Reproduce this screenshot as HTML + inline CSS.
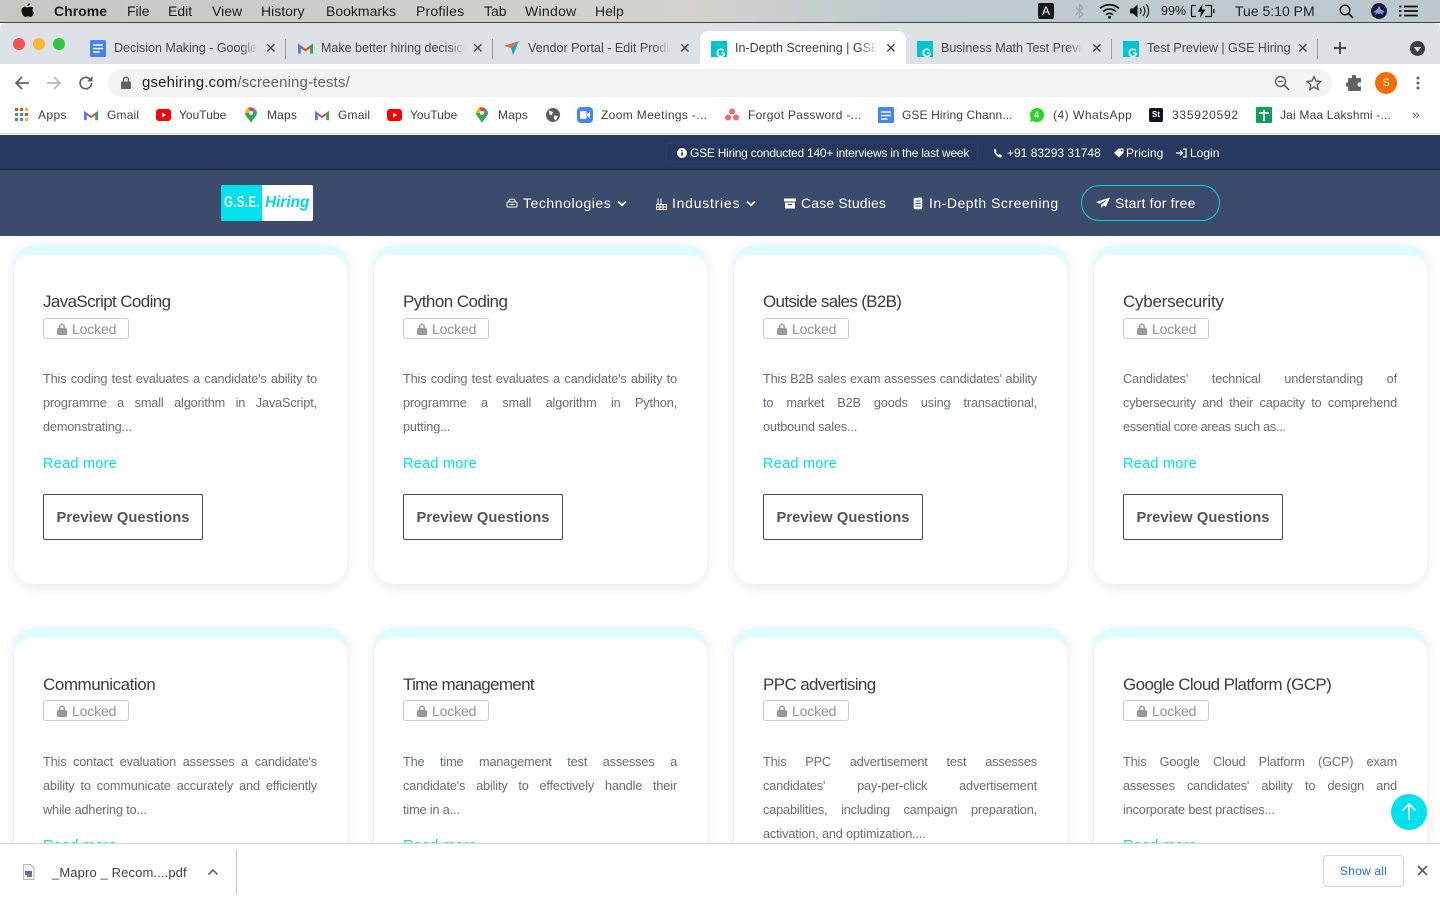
<!DOCTYPE html>
<html><head><meta charset="utf-8"><title>In-Depth Screening | GSE Hiring</title>
<style>
*{box-sizing:border-box}
html,body{margin:0;padding:0;width:1440px;height:900px;overflow:hidden;background:#fff;font-family:"Liberation Sans",sans-serif}
#root{position:relative;width:1440px;height:900px;overflow:hidden;background:#fff}
.a{position:absolute}
.t{position:absolute;white-space:nowrap;line-height:20px;height:20px}
svg{position:absolute;display:block}
#menu{left:0;top:0;width:1440px;height:23px;background:linear-gradient(90deg,#c6c7c3 0%,#cfcfca 30%,#d3d2cc 48%,#bfcbcf 62%,#bcc8cd 100%);border-bottom:1px solid #3a3f42}
#menu .t{top:1px;font-size:14px;color:#1c1c1c}
#strip{left:0;top:23px;width:1440px;height:41px;background:#dee1e6;border-radius:6px 6px 0 0}
.tab{font-size:12.5px;color:#45474a;top:38px;overflow:hidden;-webkit-mask-image:linear-gradient(90deg,#000 88%,transparent)}
.x{font-size:14px;color:#45474a;top:38px}
.sep{width:1px;height:20px;top:39px;background:#9a9da2}
#active{left:700px;top:31px;width:206px;height:33px;background:#fff;border-radius:8px 8px 0 0}
.g{width:16px;height:16px;background:#00c4d4;top:41px;overflow:hidden}
.g:after{content:"G";position:absolute;left:5px;top:5px;color:#fff;font:bold 12px/14px "Liberation Sans",sans-serif}
#tool{left:0;top:64px;width:1440px;height:33px;background:#fff}
#addr{left:108px;top:69px;width:1224px;height:28px;background:#f1f3f4;border-radius:14px}
#bm{left:0;top:97px;width:1440px;height:37px;background:#fff;border-bottom:1px solid #d0d2d6}
.b{font-size:12px;color:#3d4043;top:105px;letter-spacing:.18px}
#top{left:0;top:135px;width:1440px;height:35px;background:#27395f;border-bottom:1px solid #1c2d50}
#nav{left:0;top:170px;width:1440px;height:66px;background:#3c4b6b}
.n{font-size:14px;color:#fff;letter-spacing:.38px;top:193px}
.s{font-size:12px;color:#fff;letter-spacing:-.1px;top:143px}
.card{position:absolute;width:333px;background:#dffcfe;border-radius:20px;box-shadow:0 3px 14px rgba(0,0,0,.09);overflow:hidden}
.card i{position:absolute;left:0;top:10px;right:0;bottom:0;background:#fff;border-radius:16px 16px 20px 20px}
.ti{font-size:17px;color:#3c3c3c;letter-spacing:-.62px}
.lk{position:absolute;width:86px;height:21px;border:1px solid #ccc;border-radius:3px;color:#8f9296;font-size:14px;line-height:21px;padding-left:28px;letter-spacing:-.15px}
.lk svg{left:13px;top:4px}
.p{position:absolute;width:274px;font-size:12.7px;line-height:24px;height:24px;color:#666d75;letter-spacing:-.14px;white-space:nowrap}
.j{white-space:normal;text-align:justify;text-align-last:justify}
.r{font-size:14.5px;color:#00e1ee;letter-spacing:.25px}
.btn{position:absolute;width:160px;height:46px;border:1px solid #4b4b4b;border-radius:2px;font-weight:bold;font-size:14.7px;line-height:46px;color:#555;text-align:center;letter-spacing:.1px;background:#fff}
#dl{left:0;top:843px;width:1440px;height:57px;background:#fff;border-top:1px solid #d5d7da;z-index:5}
#up{left:1391px;top:794px;width:36px;height:36px;border-radius:50%;background:#00e1ee;z-index:4}
</style></head><body><div id="root">

<!-- page content -->
<div class="card" style="left:14px;top:245px;height:339px"><i></i></div>
<div class="card" style="left:374px;top:245px;height:339px"><i></i></div>
<div class="card" style="left:734px;top:245px;height:339px"><i></i></div>
<div class="card" style="left:1094px;top:245px;height:339px"><i></i></div>
<div class="card" style="left:14px;top:628px;height:270px"><i></i></div>
<div class="card" style="left:374px;top:628px;height:270px"><i></i></div>
<div class="card" style="left:734px;top:628px;height:270px"><i></i></div>
<div class="card" style="left:1094px;top:628px;height:270px"><i></i></div>

<div class="t ti" style="left:43px;top:292px">JavaScript Coding</div>
<div class="lk" style="left:43px;top:318px"><svg width="10" height="12" viewBox="0 0 10 12"><path fill="#999" d="M1 5h1V3.500a3 3 0 0 1 6 0V5h1a1 1 0 0 1 1 1v5a1 1 0 0 1-1 1H1a1 1 0 0 1-1-1V6a1 1 0 0 1 1-1zm2.500 0h3V3.500a1.500 1.500 0 0 0-3 0z"/></svg>Locked</div>
<div class="p j" style="left:43px;top:367px">This coding test evaluates a candidate's ability to</div>
<div class="p j" style="left:43px;top:391px">programme a small algorithm in JavaScript,</div>
<div class="p" style="left:43px;top:415px">demonstrating...</div>
<div class="t r" style="left:43px;top:454px">Read more</div>
<div class="btn" style="left:43px;top:494px">Preview Questions</div>

<div class="t ti" style="left:403px;top:292px;letter-spacing:-.55px">Python Coding</div>
<div class="lk" style="left:403px;top:318px"><svg width="10" height="12" viewBox="0 0 10 12"><path fill="#999" d="M1 5h1V3.500a3 3 0 0 1 6 0V5h1a1 1 0 0 1 1 1v5a1 1 0 0 1-1 1H1a1 1 0 0 1-1-1V6a1 1 0 0 1 1-1zm2.500 0h3V3.500a1.500 1.500 0 0 0-3 0z"/></svg>Locked</div>
<div class="p j" style="left:403px;top:367px">This coding test evaluates a candidate's ability to</div>
<div class="p j" style="left:403px;top:391px">programme a small algorithm in Python,</div>
<div class="p" style="left:403px;top:415px">putting...</div>
<div class="t r" style="left:403px;top:454px">Read more</div>
<div class="btn" style="left:403px;top:494px">Preview Questions</div>

<div class="t ti" style="left:763px;top:292px;letter-spacing:-.68px">Outside sales (B2B)</div>
<div class="lk" style="left:763px;top:318px"><svg width="10" height="12" viewBox="0 0 10 12"><path fill="#999" d="M1 5h1V3.500a3 3 0 0 1 6 0V5h1a1 1 0 0 1 1 1v5a1 1 0 0 1-1 1H1a1 1 0 0 1-1-1V6a1 1 0 0 1 1-1zm2.500 0h3V3.500a1.500 1.500 0 0 0-3 0z"/></svg>Locked</div>
<div class="p j" style="left:763px;top:367px">This B2B sales exam assesses candidates' ability</div>
<div class="p j" style="left:763px;top:391px">to market B2B goods using transactional,</div>
<div class="p" style="left:763px;top:415px">outbound sales...</div>
<div class="t r" style="left:763px;top:454px">Read more</div>
<div class="btn" style="left:763px;top:494px">Preview Questions</div>

<div class="t ti" style="left:1123px;top:292px;letter-spacing:-.25px">Cybersecurity</div>
<div class="lk" style="left:1123px;top:318px"><svg width="10" height="12" viewBox="0 0 10 12"><path fill="#999" d="M1 5h1V3.500a3 3 0 0 1 6 0V5h1a1 1 0 0 1 1 1v5a1 1 0 0 1-1 1H1a1 1 0 0 1-1-1V6a1 1 0 0 1 1-1zm2.500 0h3V3.500a1.500 1.500 0 0 0-3 0z"/></svg>Locked</div>
<div class="p j" style="left:1123px;top:367px">Candidates' technical understanding of</div>
<div class="p j" style="left:1123px;top:391px">cybersecurity and their capacity to comprehend</div>
<div class="p" style="left:1123px;top:415px;letter-spacing:-.28px">essential core areas such as...</div>
<div class="t r" style="left:1123px;top:454px">Read more</div>
<div class="btn" style="left:1123px;top:494px">Preview Questions</div>

<div class="t ti" style="left:43px;top:675px;letter-spacing:-.45px">Communication</div>
<div class="lk" style="left:43px;top:700px"><svg width="10" height="12" viewBox="0 0 10 12"><path fill="#999" d="M1 5h1V3.500a3 3 0 0 1 6 0V5h1a1 1 0 0 1 1 1v5a1 1 0 0 1-1 1H1a1 1 0 0 1-1-1V6a1 1 0 0 1 1-1zm2.500 0h3V3.500a1.500 1.500 0 0 0-3 0z"/></svg>Locked</div>
<div class="p j" style="left:43px;top:750px">This contact evaluation assesses a candidate's</div>
<div class="p j" style="left:43px;top:774px">ability to communicate accurately and efficiently</div>
<div class="p" style="left:43px;top:798px">while adhering to...</div>
<div class="t r" style="left:43px;top:836px">Read more</div>

<div class="t ti" style="left:403px;top:675px;letter-spacing:-.68px">Time management</div>
<div class="lk" style="left:403px;top:700px"><svg width="10" height="12" viewBox="0 0 10 12"><path fill="#999" d="M1 5h1V3.500a3 3 0 0 1 6 0V5h1a1 1 0 0 1 1 1v5a1 1 0 0 1-1 1H1a1 1 0 0 1-1-1V6a1 1 0 0 1 1-1zm2.500 0h3V3.500a1.500 1.500 0 0 0-3 0z"/></svg>Locked</div>
<div class="p j" style="left:403px;top:750px">The time management test assesses a</div>
<div class="p j" style="left:403px;top:774px">candidate's ability to effectively handle their</div>
<div class="p" style="left:403px;top:798px">time in a...</div>
<div class="t r" style="left:403px;top:836px">Read more</div>

<div class="t ti" style="left:763px;top:675px">PPC advertising</div>
<div class="lk" style="left:763px;top:700px"><svg width="10" height="12" viewBox="0 0 10 12"><path fill="#999" d="M1 5h1V3.500a3 3 0 0 1 6 0V5h1a1 1 0 0 1 1 1v5a1 1 0 0 1-1 1H1a1 1 0 0 1-1-1V6a1 1 0 0 1 1-1zm2.500 0h3V3.500a1.500 1.500 0 0 0-3 0z"/></svg>Locked</div>
<div class="p j" style="left:763px;top:750px">This PPC advertisement test assesses</div>
<div class="p j" style="left:763px;top:774px">candidates' pay-per-click advertisement</div>
<div class="p j" style="left:763px;top:798px">capabilities, including campaign preparation,</div>
<div class="p" style="left:763px;top:822px">activation, and optimization....</div>

<div class="t ti" style="left:1123px;top:675px">Google Cloud Platform (GCP)</div>
<div class="lk" style="left:1123px;top:700px"><svg width="10" height="12" viewBox="0 0 10 12"><path fill="#999" d="M1 5h1V3.500a3 3 0 0 1 6 0V5h1a1 1 0 0 1 1 1v5a1 1 0 0 1-1 1H1a1 1 0 0 1-1-1V6a1 1 0 0 1 1-1zm2.500 0h3V3.500a1.500 1.500 0 0 0-3 0z"/></svg>Locked</div>
<div class="p j" style="left:1123px;top:750px">This Google Cloud Platform (GCP) exam</div>
<div class="p j" style="left:1123px;top:774px">assesses candidates' ability to design and</div>
<div class="p" style="left:1123px;top:798px">incorporate best practises...</div>
<div class="t r" style="left:1123px;top:836px">Read more</div>

<div class="a" id="up"><svg width="36" height="36" viewBox="0 0 36 36"><path d="M18 26V10M11.500 16.500 18 10l6.500 6.500" fill="none" stroke="#fff" stroke-width="1.700"/></svg></div>

<!-- site header -->
<div class="a" id="top"></div>
<div class="a" style="left:666px;top:143px;width:312px;height:19px;border:1px solid #2c3e66;border-radius:4px;background:#25375c"></div>
<svg style="left:677px;top:148px" width="10" height="10" viewBox="0 0 10 10"><circle cx="5" cy="5" r="5" fill="#fff"/><path d="M4.200 4.200h1.600v3.600H4.200zM4.200 2h1.600v1.400H4.200z" fill="#27395f"/></svg>
<div class="t s" style="left:690px;letter-spacing:-.24px">GSE Hiring conducted 140+ interviews in the last week</div>
<svg style="left:993px;top:148px" width="10" height="10" viewBox="0 0 10 10"><path fill="#fff" d="M2 .5 3.600 3 2.800 4c.5 1.300 1.500 2.300 2.800 2.900l1-.9L9 7.600 8 9.500C4 9.500 .8 5.500 1 1.500z"/></svg>
<div class="t s" style="left:1007px;letter-spacing:0">+91 83293 31748</div>
<svg style="left:1113px;top:148px" width="11" height="10" viewBox="0 0 11 10"><path fill="#fff" d="M5.500 .5H10.500v4.500L6 9.500 1 5z"/><circle cx="8.500" cy="2.500" r="1" fill="#27395f"/></svg>
<div class="t s" style="left:1126px;letter-spacing:.1px">Pricing</div>
<svg style="left:1176px;top:148px" width="11" height="10" viewBox="0 0 11 10"><path fill="none" stroke="#fff" stroke-width="1.200" d="M0 5h6M4 2.500 6.500 5 4 7.500M7 1h3v8H7"/></svg>
<div class="t s" style="left:1190px;letter-spacing:0">Login</div>

<div class="a" id="nav"></div>
<div class="a" style="left:221px;top:185px;width:92px;height:36px;background:#fff;border-radius:2px;overflow:hidden">
<div class="a" style="left:0;top:0;width:41px;height:36px;background:#00e1ee"></div>
<div class="t" style="left:3px;top:8px;font-weight:bold;font-size:16px;color:#fff;transform:scaleX(.72);transform-origin:0 50%;letter-spacing:.4px">G.S.E.</div>
<div class="t" style="left:44px;top:8px;font-weight:bold;font-style:italic;font-size:16px;color:#00d8e8;transform:scaleX(.96);transform-origin:0 50%">Hiring</div>
</div>
<svg style="left:506px;top:198px" width="12" height="11" viewBox="0 0 12 11"><path fill="none" stroke="#fff" stroke-width="1" d="M2.500 4 3.500 1.200h5L9.500 4M1 5a1 1 0 0 1 1-1h8a1 1 0 0 1 1 1v3a1 1 0 0 1-1 1H2a1 1 0 0 1-1-1zM3 6.500h6"/></svg>
<div class="t n" style="left:523px;letter-spacing:.55px">Technologies</div>
<svg style="left:617px;top:200px" width="10" height="7" viewBox="0 0 10 7"><path d="M1 1.500 5 5.300 9 1.500" fill="none" stroke="#fff" stroke-width="1.800"/></svg>
<svg style="left:656px;top:198px" width="11" height="12" viewBox="0 0 11 12"><path fill="none" stroke="#fff" stroke-width="1" d="M2 .5v6M5 .5v6M.5 11.500V6.500h10v5zM.5 9h10M4 6.500v5M7 6.500v5"/></svg>
<div class="t n" style="left:672px;letter-spacing:.75px">Industries</div>
<svg style="left:746px;top:200px" width="10" height="7" viewBox="0 0 10 7"><path d="M1 1.500 5 5.300 9 1.500" fill="none" stroke="#fff" stroke-width="1.800"/></svg>
<svg style="left:784px;top:198px" width="12" height="11" viewBox="0 0 12 11"><path fill="#fff" d="M0 .5h12v3H0zM1 4.500h10V10.500H1z"/><path fill="#3c4b6b" d="M4 6h4v1.200H4z"/></svg>
<div class="t n" style="left:801px;letter-spacing:.15px">Case Studies</div>
<svg style="left:913px;top:197px" width="10" height="13" viewBox="0 0 10 13"><path fill="#fff" d="M1.500 1 8 .5a1 1 0 0 1 1.200 1V11a1 1 0 0 1-1 1.200H2A1.500 1.500 0 0 1 .7 11V2a1 1 0 0 1 .8-1z"/><path stroke="#3c4b6b" d="M2.500 4h5M2.500 6.500h5M2.500 9h5"/></svg>
<div class="t n" style="left:929px;letter-spacing:.5px">In-Depth Screening</div>
<div class="a" style="left:1081px;top:185px;width:139px;height:36px;border:1px solid #00d5e0;border-radius:18px"></div>
<svg style="left:1096px;top:197px" width="14" height="12" viewBox="0 0 14 12"><path fill="#fff" d="M14 .5 0 5l3.500 1.800L11 2.500 5 8v3l2.200-2.500 2.800 1.300z"/></svg>
<div class="t n" style="left:1115px;letter-spacing:.2px">Start for free</div>

<!-- download bar -->
<div class="a" id="dl">
<svg style="left:22px;top:20px" width="13" height="16" viewBox="0 0 13 16"><path d="M1.500.5h7l3.500 3.500v11.500h-10.500z" fill="#f3f4f6" stroke="#b6b8bc"/><rect x="3" y="7" width="7" height="4" fill="#5d6fa6"/><rect x="5" y="10" width="5" height="3" fill="#9a6a72"/></svg>
<div class="t" style="left:52px;top:19px;font-size:13px;color:#3d4043;letter-spacing:.12px">_Mapro _ Recom....pdf</div>
<svg style="left:207px;top:24px" width="12" height="8" viewBox="0 0 12 8"><path d="M1.500 6.500 6 2l4.500 4.500" fill="none" stroke="#5f6368" stroke-width="1.600"/></svg>
<div class="a" style="left:236px;top:6px;width:1px;height:44px;background:#c8cacd"></div>
<div class="a" style="left:1323px;top:11px;width:81px;height:32px;border:1px solid #d5d7da;border-radius:4px;color:#1a73e8;font-size:12px;line-height:30px;text-align:center;letter-spacing:.2px">Show all</div>
<svg style="left:1417px;top:21px" width="11" height="11" viewBox="0 0 11 11"><path d="M1 1 10 10M10 1 1 10" stroke="#5f6368" stroke-width="1.800"/></svg>
</div>

<!-- mac menu -->
<div class="a" id="menu">
<svg style="left:21px;top:3px" width="13" height="15" viewBox="0 0 13 15"><path fill="#111" d="M9.200.2c.1 1.100-1.200 2.800-2.800 2.700C6.200 1.600 7.700.2 9.200.2zM12.600 5c-1.600 1-1.500 3.700.4 4.600-.6 1.700-2 4.400-3.500 4.400-.9 0-1.400-.6-2.500-.6s-1.600.6-2.500.6C2.700 14 .4 10.600.4 7.800c0-2.600 1.800-4 3.400-4 1.100 0 1.900.7 2.700.7.700 0 1.700-.8 3-.8.900 0 2.200.4 3.100 1.300z"/></svg>
<div class="t" style="left:54px;font-weight:bold;letter-spacing:.02px">Chrome</div>
<div class="t" style="left:127px">File</div>
<div class="t" style="left:168px">Edit</div>
<div class="t" style="left:212px">View</div>
<div class="t" style="left:261px">History</div>
<div class="t" style="left:326px">Bookmarks</div>
<div class="t" style="left:416px;letter-spacing:.2px">Profiles</div>
<div class="t" style="left:484px">Tab</div>
<div class="t" style="left:525px;letter-spacing:.3px">Window</div>
<div class="t" style="left:595px">Help</div>
<div class="a" style="left:1038px;top:3px;width:16px;height:16px;background:#14181c;border-radius:2px;color:#fff;font-size:12px;line-height:16px;text-align:center">A</div>
<svg style="left:1074px;top:3px" width="12" height="16" viewBox="0 0 12 16"><path d="M2 4.500 9 11l-3.500 3.500V1.500L9 5 2 11.500" fill="none" stroke="#9fa8ac" stroke-width="1.200"/></svg>
<svg style="left:1099px;top:3px" width="21" height="16" viewBox="0 0 21 16"><path d="M1 5.500c5-5 14-5 19 0M4 8.700c3.500-3.500 9.500-3.500 13 0M7 11.800c2-2 5-2 7 0" fill="none" stroke="#111" stroke-width="1.700"/><circle cx="10.500" cy="14.200" r="1.500" fill="#111"/></svg>
<svg style="left:1130px;top:3px" width="21" height="16" viewBox="0 0 21 16"><path fill="#111" d="M0 5.500h3L7.500 1.500v13L3 10.500H0z"/><path d="M10 5c1.500 2 1.500 4 0 6M13 3c2.500 3 2.500 7 0 10M16 1c3.500 4 3.500 10 0 14" fill="none" stroke="#111" stroke-width="1.100"/></svg>
<div class="t" style="left:1161px;top:1px;font-size:12.5px">99%</div>
<svg style="left:1190px;top:3px" width="25" height="16" viewBox="0 0 25 16"><path d="M6 2.500H1.500v11H6M15 2.500h6.500v11H15" fill="none" stroke="#111" stroke-width="1.200"/><path d="M23 6h1.500v4H23z" fill="#111"/><path d="M12.500 1 7.500 9h3.500l-1 6 5.500-8.500h-3.500z" fill="#111"/></svg>
<div class="t" style="left:1235px">Tue 5:10 PM</div>
<svg style="left:1339px;top:4px" width="15" height="15" viewBox="0 0 15 15"><circle cx="6" cy="6" r="4.800" fill="none" stroke="#111" stroke-width="1.300"/><path d="M9.500 9.500 14 14" stroke="#111" stroke-width="1.600"/></svg>
<svg style="left:1371px;top:3px" width="16" height="16" viewBox="0 0 16 16"><circle cx="8" cy="8" r="8" fill="#1a1a3c"/><path d="M8 2 12 12 8 9 4 12z" fill="#d15bc6"/><path d="M8 5 14 9 8 11 2 9z" fill="#5bbde0" opacity=".8"/></svg>
<svg style="left:1399px;top:5px" width="19" height="12" viewBox="0 0 19 12"><path stroke="#111" stroke-width="1.800" d="M5 1.500h14M5 6h14M5 10.500h14M0 1.500h2.500M0 6h2.500M0 10.500h2.500"/></svg>
</div>

<!-- tab strip -->
<div class="a" id="strip"></div>
<div class="a" style="left:13px;top:38px;width:12px;height:12px;border-radius:50%;background:#f0524f"></div>
<div class="a" style="left:33px;top:38px;width:12px;height:12px;border-radius:50%;background:#fbb62a"></div>
<div class="a" style="left:53px;top:38px;width:12px;height:12px;border-radius:50%;background:#2ac840"></div>

<svg style="left:90px;top:40px" width="16" height="17" viewBox="0 0 16 17"><rect width="16" height="17" rx="1.500" fill="#4285f4"/><path stroke="#fff" stroke-width="1.600" d="M3 5h10M3 8.500h10M3 12h6.500"/></svg>
<div class="t tab" style="left:114px;width:144px">Decision Making - Google Docs</div>
<div class="t x" style="left:265px">✕</div>
<div class="a sep" style="left:285px"></div>
<svg style="left:298px;top:42px" width="15" height="12" viewBox="0 0 15 12"><path fill="#ea4335" d="M0 1.500 7.500 7 15 1.500V4L7.500 9.500 0 4z"/><path fill="#4285f4" d="M0 1.500v10h3V4z"/><path fill="#34a853" d="M15 1.500v10h-3V4z"/></svg>
<div class="t tab" style="left:321px;width:144px">Make better hiring decisions</div>
<div class="t x" style="left:472px">✕</div>
<div class="a sep" style="left:492px"></div>
<svg style="left:504px;top:40px" width="16" height="16" viewBox="0 0 16 16"><path fill="#f36d21" d="M0 6 15 1 7 8z"/><path fill="#1f9ae0" d="M15 1 9 15 7 8z"/></svg>
<div class="t tab" style="left:528px;width:142px">Vendor Portal - Edit Product</div>
<div class="t x" style="left:679px">✕</div>

<div class="a" id="active"></div>
<div class="a g" style="left:711px"></div>
<div class="t tab" style="left:735px;width:142px;color:#3c4043">In-Depth Screening | GSE Hiring</div>
<div class="t x" style="left:885px;color:#3c4043">✕</div>

<div class="a g" style="left:917px"></div>
<div class="t tab" style="left:941px;width:142px">Business Math Test Preview</div>
<div class="t x" style="left:1091px">✕</div>
<div class="a sep" style="left:1111px"></div>
<div class="a g" style="left:1123px"></div>
<div class="t tab" style="left:1147px;width:144px;-webkit-mask-image:none">Test Preview | GSE Hiring</div>
<div class="t x" style="left:1297px">✕</div>
<div class="a sep" style="left:1317px"></div>
<svg style="left:1333px;top:41px" width="14" height="14" viewBox="0 0 14 14"><path d="M7 1v12M1 7h12" stroke="#3c4043" stroke-width="1.800"/></svg>
<svg style="left:1410px;top:41px" width="15" height="15" viewBox="0 0 15 15"><circle cx="7.500" cy="7.500" r="7.500" fill="#3c4043"/><path d="M3.800 6h7.400L7.500 11z" fill="#dee1e6"/></svg>

<!-- toolbar -->
<div class="a" id="tool"></div>
<svg style="left:14px;top:75px" width="16" height="16" viewBox="0 0 16 16"><path d="M15 8H2M8 2 2 8l6 6" fill="none" stroke="#5f6368" stroke-width="1.700"/></svg>
<svg style="left:46px;top:75px" width="16" height="16" viewBox="0 0 16 16"><path d="M1 8h13M8 2l6 6-6 6" fill="none" stroke="#b4b6b9" stroke-width="1.700"/></svg>
<svg style="left:78px;top:75px" width="16" height="16" viewBox="0 0 16 16"><path d="M13.500 8a5.700 5.700 0 1 1-1.700-4L14 6" fill="none" stroke="#5f6368" stroke-width="1.700"/><path d="M14.500 1v5.500H9z" fill="#5f6368"/></svg>
<div class="a" id="addr"></div>
<svg style="left:121px;top:76px" width="10" height="13" viewBox="0 0 10 13"><path fill="#5f6368" d="M1 5.500h.8V3.700a3.200 3.200 0 0 1 6.400 0v1.800H9a1 1 0 0 1 1 1V12a1 1 0 0 1-1 1H1a1 1 0 0 1-1-1V6.500a1 1 0 0 1 1-1zm2.200 0h3.600V3.700a1.800 1.800 0 0 0-3.600 0z"/></svg>
<div class="t" style="left:142px;top:73px;font-size:15px;color:#202124;letter-spacing:.15px">gsehiring.com<span style="color:#5f6368">/screening-tests/</span></div>
<svg style="left:1274px;top:75px" width="16" height="16" viewBox="0 0 16 16"><circle cx="6.500" cy="6.500" r="5" fill="none" stroke="#5f6368" stroke-width="1.400"/><path d="M10.200 10.200 15 15" stroke="#5f6368" stroke-width="1.600"/><path d="M4 6.500h5" stroke="#5f6368" stroke-width="1.200"/></svg>
<svg style="left:1306px;top:75px" width="16" height="16" viewBox="0 0 16 16"><path d="M8 1.500l2 4.500 4.800.5-3.600 3.200 1 4.800L8 12.100 3.800 14.500l1-4.800L1.200 6.500 6 6z" fill="none" stroke="#5f6368" stroke-width="1.400"/></svg>
<svg style="left:1346px;top:75px" width="16" height="16" viewBox="0 0 16 16"><path fill="#5f6368" d="M6 1.500a2 2 0 0 1 4 0V3h4a1 1 0 0 1 1 1v3.500h-1.500a2 2 0 0 0 0 4H15V15a1 1 0 0 1-1 1H3a1 1 0 0 1-1-1v-3.500H.8a2 2 0 0 1 0-4H2V4a1 1 0 0 1 1-1h3z"/></svg>
<div class="a" style="left:1375px;top:72px;width:22px;height:22px;border-radius:50%;background:#f96a06;color:#fff;font-size:11px;line-height:22px;text-align:center">S</div>
<svg style="left:1416px;top:76px" width="4" height="14" viewBox="0 0 4 14"><circle cx="2" cy="2" r="1.500" fill="#5f6368"/><circle cx="2" cy="7" r="1.500" fill="#5f6368"/><circle cx="2" cy="12" r="1.500" fill="#5f6368"/></svg>

<!-- bookmarks -->
<div class="a" id="bm"></div>
<svg style="left:15px;top:108px" width="14" height="14" viewBox="0 0 14 14"><g><rect width="3" height="3" fill="#ea4335"/><rect x="5" width="3" height="3" fill="#ea4335"/><rect x="10" width="3" height="3" fill="#fbbc04"/><rect y="5" width="3" height="3" fill="#34a853"/><rect x="5" y="5" width="3" height="3" fill="#4285f4"/><rect x="10" y="5" width="3" height="3" fill="#ea4335"/><rect y="10" width="3" height="3" fill="#34a853"/><rect x="5" y="10" width="3" height="3" fill="#4285f4"/><rect x="10" y="10" width="3" height="3" fill="#fbbc04"/></g></svg>
<div class="t b" style="left:38px;letter-spacing:.4px">Apps</div>
<svg style="left:84px;top:109px" width="14" height="12" viewBox="0 0 15 12"><path fill="#ea4335" d="M0 1.500 7.500 7 15 1.500V4L7.500 9.500 0 4z"/><path fill="#4285f4" d="M0 1.500v10h3V4z"/><path fill="#34a853" d="M15 1.500v10h-3V4z"/></svg>
<div class="t b" style="left:107px">Gmail</div>
<svg style="left:156px;top:109px" width="15" height="12" viewBox="0 0 15 12"><rect width="15" height="12" rx="3" fill="#f00"/><path d="M6 3.500v5l4-2.500z" fill="#fff"/></svg>
<div class="t b" style="left:179px;letter-spacing:.02px">YouTube</div>
<svg style="left:245px;top:107px" width="12" height="16" viewBox="0 0 12 16"><path fill="#34a853" d="M6 16C4 12 0 9 0 6h12c0 3-4 6-6 10z"/><path fill="#fbbc04" d="M0 6a6 6 0 0 1 3-5l3 5z"/><path fill="#ea4335" d="M3 1a6 6 0 0 1 7 1L6 6z"/><path fill="#4285f4" d="M10 2a6 6 0 0 1 2 4H6z"/><circle cx="6" cy="6" r="2" fill="#fff"/></svg>
<div class="t b" style="left:267px">Maps</div>
<svg style="left:315px;top:109px" width="14" height="12" viewBox="0 0 15 12"><path fill="#ea4335" d="M0 1.500 7.500 7 15 1.500V4L7.500 9.500 0 4z"/><path fill="#4285f4" d="M0 1.500v10h3V4z"/><path fill="#34a853" d="M15 1.500v10h-3V4z"/></svg>
<div class="t b" style="left:338px">Gmail</div>
<svg style="left:387px;top:109px" width="15" height="12" viewBox="0 0 15 12"><rect width="15" height="12" rx="3" fill="#f00"/><path d="M6 3.500v5l4-2.500z" fill="#fff"/></svg>
<div class="t b" style="left:410px;letter-spacing:.02px">YouTube</div>
<svg style="left:476px;top:107px" width="12" height="16" viewBox="0 0 12 16"><path fill="#34a853" d="M6 16C4 12 0 9 0 6h12c0 3-4 6-6 10z"/><path fill="#fbbc04" d="M0 6a6 6 0 0 1 3-5l3 5z"/><path fill="#ea4335" d="M3 1a6 6 0 0 1 7 1L6 6z"/><path fill="#4285f4" d="M10 2a6 6 0 0 1 2 4H6z"/><circle cx="6" cy="6" r="2" fill="#fff"/></svg>
<div class="t b" style="left:498px">Maps</div>
<svg style="left:546px;top:108px" width="14" height="14" viewBox="0 0 14 14"><circle cx="7" cy="7" r="7" fill="#5a5d61"/><path d="M3 2.500 7 4 6 7 3.500 6.500zM8 7.500l4 .5-2 4.500-2-1.500z" fill="#fff"/></svg>
<div class="a" style="left:577px;top:107px;width:16px;height:16px;border-radius:4px;background:#3d8bf2"></div>
<svg style="left:580px;top:111px" width="10" height="8" viewBox="0 0 10 8"><rect width="6.500" height="8" rx="1.500" fill="#fff"/><path d="M7 3 10 1v6L7 5z" fill="#fff"/></svg>
<div class="t b" style="left:601px;letter-spacing:.35px">Zoom Meetings -...</div>
<svg style="left:725px;top:108px" width="14" height="13" viewBox="0 0 14 13"><circle cx="7" cy="3.500" r="3" fill="#f06a6a"/><circle cx="3" cy="9.500" r="3" fill="#f06a6a"/><circle cx="11" cy="9.500" r="3" fill="#f06a6a"/></svg>
<div class="t b" style="left:748px;letter-spacing:.27px">Forgot Password -...</div>
<svg style="left:878px;top:107px" width="16" height="16" viewBox="0 0 16 16"><rect width="16" height="16" rx="1.500" fill="#4285f4"/><path stroke="#fff" stroke-width="1.600" d="M3 5h10M3 8.500h10M3 12h6.500"/></svg>
<div class="t b" style="left:902px;letter-spacing:.1px">GSE Hiring Chann...</div>
<svg style="left:1030px;top:108px" width="14" height="14" viewBox="0 0 14 14"><circle cx="7" cy="7" r="7" fill="#25d922"/><path d="M0 14 1.500 9 5 12.500z" fill="#25d922"/></svg>
<div class="t" style="left:1034px;top:105px;font-size:9px;font-weight:bold;color:#fff">4</div>
<div class="t b" style="left:1053px;letter-spacing:.5px">(4) WhatsApp</div>
<div class="a" style="left:1149px;top:108px;width:14px;height:14px;background:#0e1420;border-radius:2px;color:#fff;font-size:8px;font-weight:bold;line-height:14px;text-align:center">St</div>
<div class="t b" style="left:1172px;letter-spacing:.75px">335920592</div>
<svg style="left:1256px;top:107px" width="16" height="16" viewBox="0 0 16 16"><rect width="16" height="16" rx="1" fill="#0f9d58"/><path d="M3 6h10M8 3v11" stroke="#fff" stroke-width="1.800"/></svg>
<div class="t b" style="left:1280px;letter-spacing:.18px">Jai Maa Lakshmi -...</div>
<div class="t" style="left:1412px;top:104px;font-size:14px;color:#5f6368">»</div>

</div></body></html>
